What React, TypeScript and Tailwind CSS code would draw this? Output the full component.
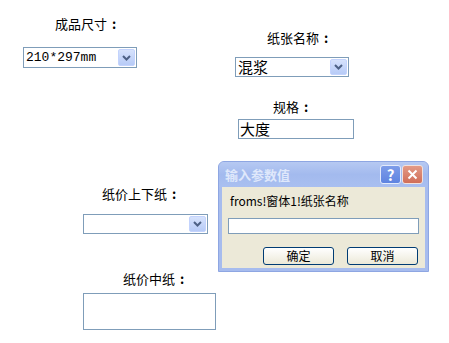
import type { ReactNode } from "react";

const cjk = "font-['Noto_Sans_CJK_SC','Noto_Sans',sans-serif]";

function Label({ text, className }: { text: string; className?: string }) {
  return (
    <div className={`h-[16px] whitespace-nowrap text-[13px] leading-[17px] text-black ${className ?? ""}`}>
      {text}
      <span className="ml-[5px] font-bold">:</span>
    </div>
  );
}

function ComboBox({ value, className, textClass }: { value?: ReactNode; className?: string; textClass?: string }) {
  return (
    <div className={`flex items-center border border-[#7f9db9] bg-white p-px ${className ?? ""}`}>
      <div className={`flex-1 whitespace-nowrap pl-px leading-[16px] text-black ${textClass ?? ""}`}>{value}</div>
      <div className="flex h-full w-[17px] items-center justify-center rounded-[2px] border border-[#c3d3fd] bg-gradient-to-b from-[#d6e2fc] to-[#b7cbf7]">
        <svg width="9" height="6" viewBox="0 0 9 6">
          <path d="M1 1 L4.5 4.5 L8 1" fill="none" stroke="#4d6185" strokeWidth="2" />
        </svg>
      </div>
    </div>
  );
}

function XpButton({ children }: { children: ReactNode }) {
  return (
    <button
      type="button"
      className="flex h-[18px] w-[71px] items-center justify-center rounded-[3px] border border-[#003c74] bg-gradient-to-b from-white to-[#ece9d8] text-[12px] leading-none text-black"
    >
      {children}
    </button>
  );
}

function InputDialog() {
  return (
    <div className="absolute left-[218px] top-[161px] flex h-[111px] w-[211px] flex-col rounded-t-[6px] border border-[#8ea6e2] bg-[#a7bcee]">
      <div className="flex h-[25px] items-center rounded-t-[5px] bg-gradient-to-b from-[#b6c9f2] via-[#a3baee] to-[#a9bff0] pl-[6px] pr-[5px]">
        <span className="flex-1 text-[13px] font-bold leading-none text-[#dfe8fb]">输入参数值</span>
        <div className="flex h-[19px] w-[21px] items-center justify-center rounded-[3px] border border-[#e4ebfb] bg-gradient-to-b from-[#7d9ce9] to-[#5f84e0] text-[15px] font-bold leading-none text-white">
          ?
        </div>
        <div className="ml-px flex h-[19px] w-[21px] items-center justify-center rounded-[3px] border border-[#f1e1dc] bg-gradient-to-b from-[#e39a86] to-[#d06e58]">
          <svg width="11" height="11" viewBox="0 0 11 11">
            <path d="M1.5 1.5 L9.5 9.5 M9.5 1.5 L1.5 9.5" stroke="white" strokeWidth="2" />
          </svg>
        </div>
      </div>
      <div className="mx-[3px] mb-[3px] flex flex-1 flex-col bg-[#ece9d8]">
        <div className="mt-[7px] pl-[8px] text-[12px] leading-[14px] text-black">froms!窗体1!纸张名称</div>
        <div className="ml-[6px] mt-[10px] h-[16px] w-[191px] border border-[#7f9db9] bg-white" />
        <div className="mt-[13px] flex gap-[13px] pl-[41px]">
          <XpButton>确定</XpButton>
          <XpButton>取消</XpButton>
        </div>
      </div>
    </div>
  );
}

export default function App() {
  return (
    <div className={`relative h-[343px] w-[449px] overflow-hidden bg-white ${cjk}`}>
      <div className="flex items-start">
        <div className="ml-[23px] mt-[15px] w-[114px]">
          <Label text="成品尺寸" className="pl-[32px]" />
          <ComboBox
            value="210*297mm"
            textClass="font-['Liberation_Mono',monospace] text-[13px]"
            className="mt-[16px] h-[21px] w-[114px]"
          />
        </div>
        <div className="ml-[98px] mt-[29px] w-[119px]">
          <Label text="纸张名称" className="pl-[32px]" />
          <ComboBox value="混浆" textClass="text-[15px]" className="mt-[12px] h-[20px] w-[114px]" />
          <Label text="规格" className="mt-[21px] pl-[38px]" />
          <div className="ml-[3px] mt-[5px] flex h-[20px] w-[116px] items-center border border-[#7f9db9] bg-white pl-px text-[15px] leading-[16px] text-black">
            大度
          </div>
        </div>
      </div>

      <div className="ml-[83px] mt-[46px]">
        <Label text="纸价上下纸" className="pl-[19px]" />
        <ComboBox className="mt-[13px] h-[20px] w-[125px]" />
        <Label text="纸价中纸" className="mt-[36px] pl-[40px]" />
        <div className="mt-[7px] h-[37px] w-[133px] border border-[#7f9db9] bg-white" />
      </div>

      <InputDialog />
    </div>
  );
}
